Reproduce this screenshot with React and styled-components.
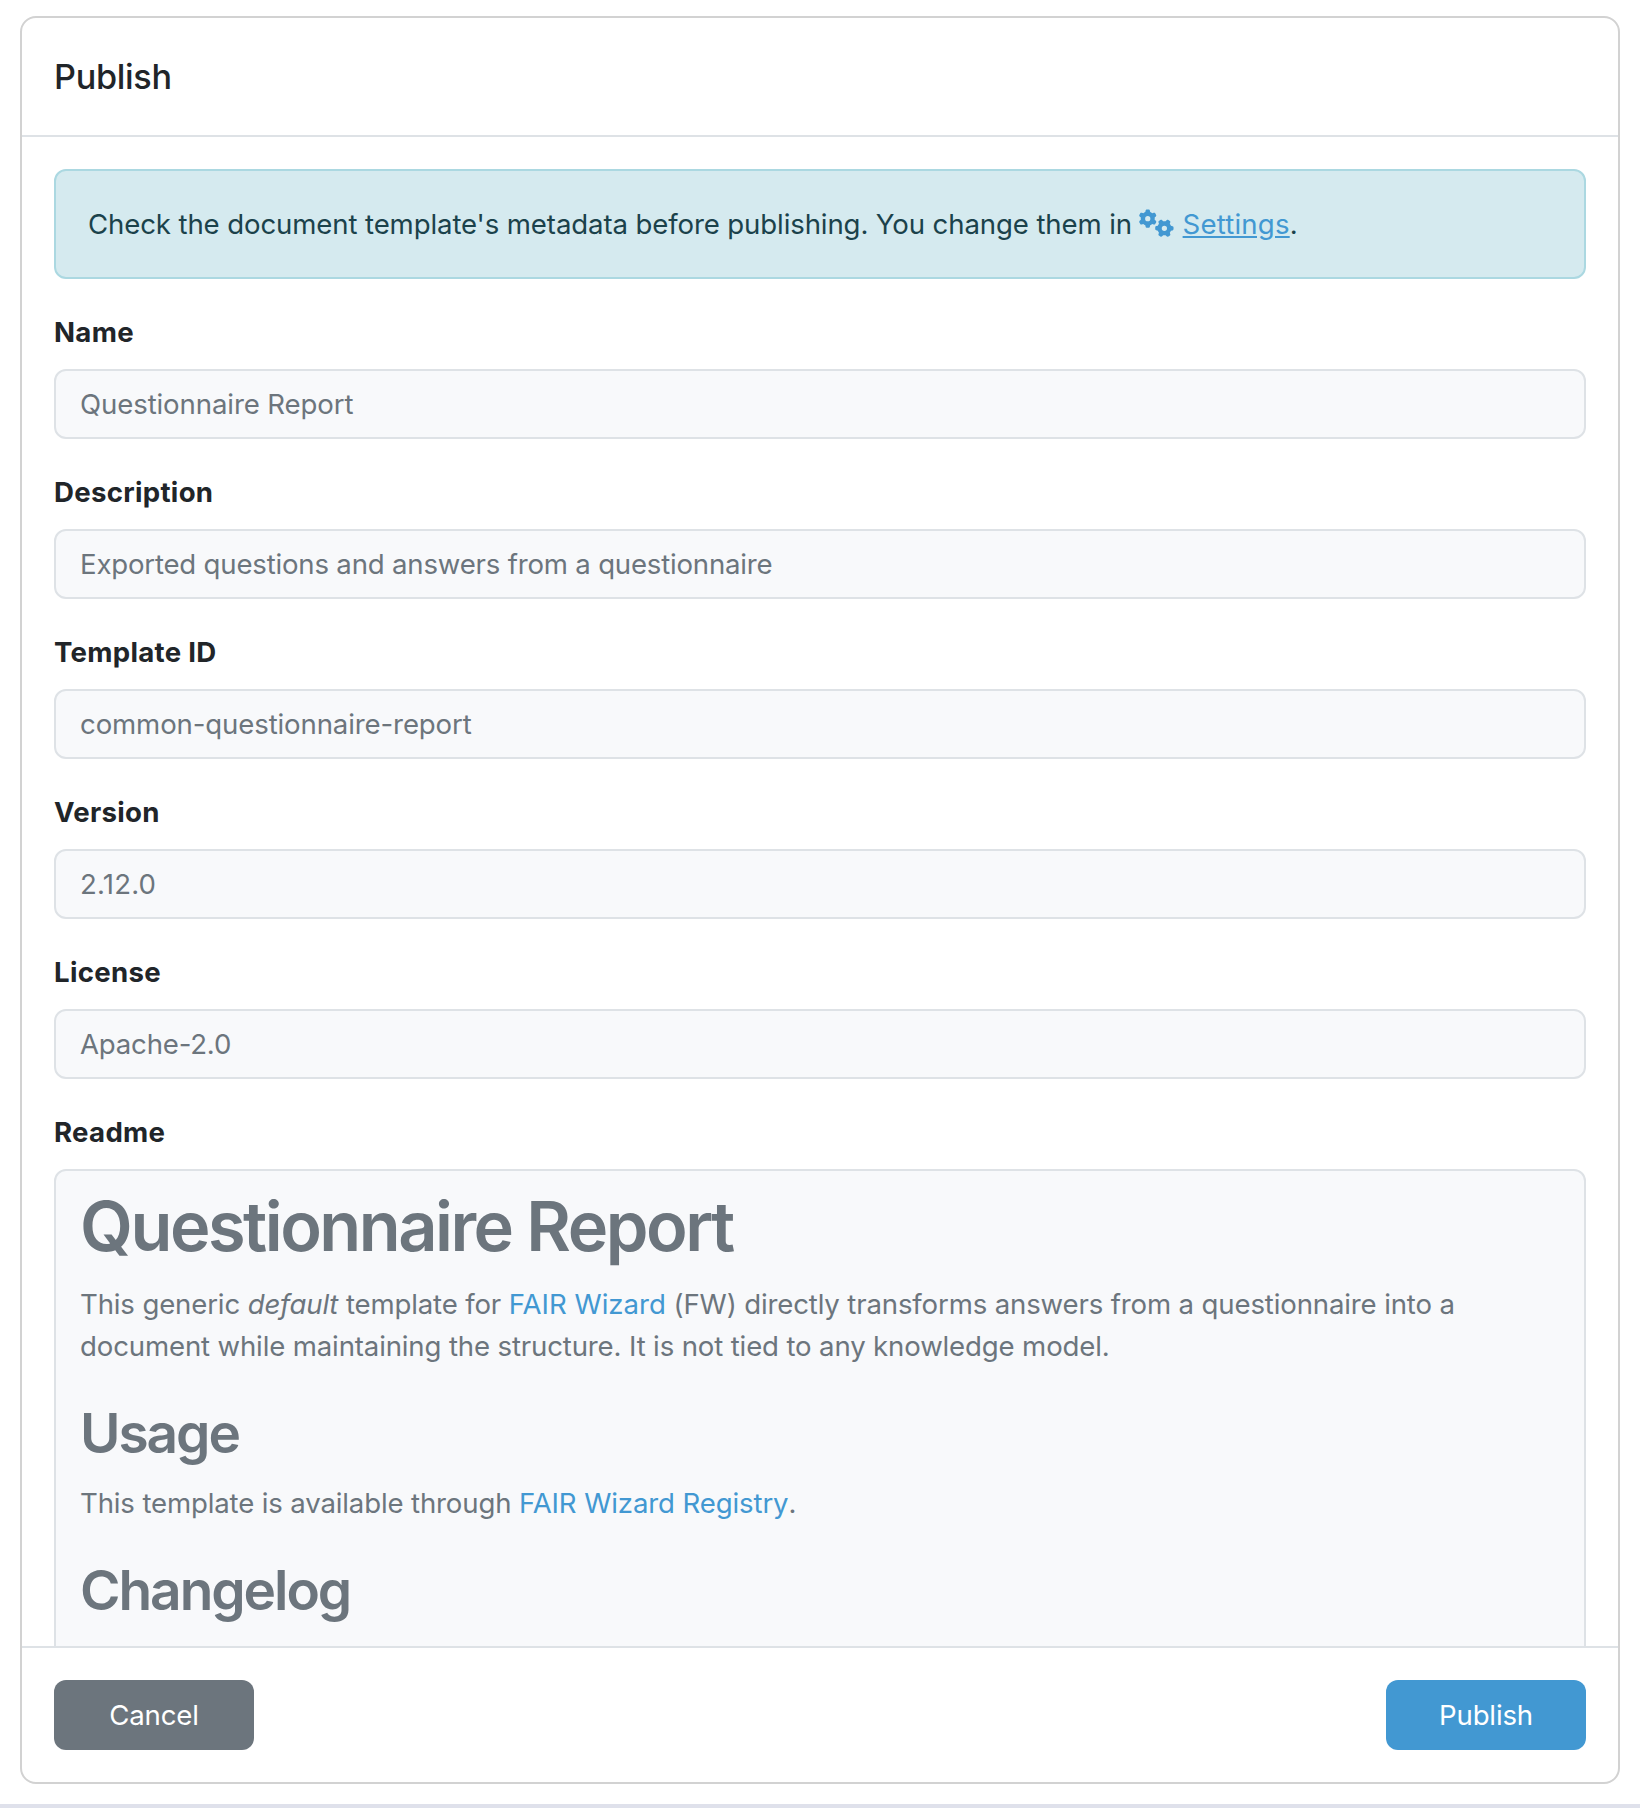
import React from 'react';
import styled, { createGlobalStyle } from 'styled-components';
import { FaGears } from 'react-icons/fa6';

const GlobalStyle = createGlobalStyle`
  *, *::before, *::after { box-sizing: border-box; }
  body {
    margin: 0;
    background: #fff;
    color: #212529;
    font-family: Inter, "Liberation Sans", sans-serif;
    font-size: 27.6px;
    line-height: 42px;
  }
`;

const Page = styled.main`
  height: 1808px;
  padding: 16px 20px 20px;
  border-bottom: 4px solid #dfe1eb;
`;

const Card = styled.section`
  display: flex;
  flex-direction: column;
  height: 1768px;
  overflow: hidden;
  border: 2px solid #d2d2d2;
  border-radius: 16px;
  background: #fff;
`;

const CardHeader = styled.header`
  flex: none;
  padding: 32px;
  border-bottom: 2px solid #dee2e6;
`;

const Title = styled.h5`
  margin: 0;
  font-size: 34.2px;
  font-weight: 500;
  letter-spacing: -0.3px;
  line-height: 53px;
`;

const CardBody = styled.div`
  flex: 1;
  min-height: 0;
  overflow: hidden;
  padding: 32px;
`;

const CardFooter = styled.footer`
  flex: none;
  display: flex;
  justify-content: space-between;
  padding: 32px;
  border-top: 2px solid #dee2e6;
`;

const Alert = styled.div`
  height: 110px;
  padding: 32px;
  border: 2px solid #abd8e1;
  border-radius: 12px;
  background: #d5eaef;
  color: #1b424b;
  letter-spacing: -0.12px;
`;

const Link = styled.a`
  color: #4298d2;
  letter-spacing: ${({ $tracking = 0 }) => $tracking}px;
  text-decoration: ${({ $underline }) => ($underline ? 'underline' : 'none')};
`;

const GearsIcon = styled(FaGears)`
  width: 35px;
  height: 28px;
  margin: 0 9px 0 -1px;
  color: #4298d2;
  vertical-align: -3px;
`;

const Field = styled.div`
  margin-top: 32px;
`;

const Label = styled.div`
  margin-bottom: 16px;
  font-weight: 700;
  letter-spacing: 0.3px;
`;

const Value = styled.div`
  padding: 12px 24px;
  border: 2px solid #dee2e6;
  border-radius: 12px;
  background: #f8f9fb;
  color: #6c757d;
  letter-spacing: ${({ $tracking = 0 }) => $tracking}px;
`;

const Readme = styled(Value)`
  padding-bottom: 48px;
`;

const Heading = styled.h1`
  margin: 0 0 14px;
  padding-top: 2px;
  font-size: 68.5px;
  font-weight: 600;
  letter-spacing: -2.5px;
  line-height: 84px;
`;

const Subheading = styled.h2`
  margin: 0 0 15px;
  padding-top: 1px;
  font-size: 55px;
  font-weight: 600;
  letter-spacing: -2.05px;
  line-height: 67.2px;
`;

const Paragraph = styled.p`
  margin: 0 0 32px;
  letter-spacing: -0.15px;
`;

const Button = styled.button`
  width: 200px;
  height: 70px;
  border: 0;
  border-radius: 12px;
  background: ${({ $primary }) => ($primary ? '#4298d2' : '#6c757d')};
  color: #fff;
  font: inherit;
  letter-spacing: -0.18px;
`;

const fields = [
  { label: 'Name', value: 'Questionnaire Report', tracking: -0.11 },
  { label: 'Description', value: 'Exported questions and answers from a questionnaire', tracking: -0.2 },
  { label: 'Template ID', value: 'common-questionnaire-report', tracking: -0.13 },
  { label: 'Version', value: '2.12.0', tracking: 0.18 },
  { label: 'License', value: 'Apache-2.0', tracking: -0.2 },
];

export default function App() {
  return (
    <Page>
      <GlobalStyle />
      <Card>
        <CardHeader>
          <Title>Publish</Title>
        </CardHeader>
        <CardBody>
          <Alert>
            Check the document template's metadata before publishing. You change them in{' '}
            <GearsIcon />
            <Link $underline $tracking={0.18}>Settings</Link>.
          </Alert>
          {fields.map(({ label, value, tracking }) => (
            <Field key={label}>
              <Label>{label}</Label>
              <Value $tracking={tracking}>{value}</Value>
            </Field>
          ))}
          <Field>
            <Label>Readme</Label>
            <Readme>
              <Heading>Questionnaire Report</Heading>
              <Paragraph>
                This generic <em>default</em> template for{' '}
                <Link>FAIR Wizard</Link> (FW) directly transforms answers from a
                questionnaire into a document while maintaining the structure. It is not tied to
                any knowledge model.
              </Paragraph>
              <Subheading>Usage</Subheading>
              <Paragraph>
                This template is available through{' '}
                <Link $tracking={-0.12}>FAIR Wizard Registry</Link>.
              </Paragraph>
              <Subheading>Changelog</Subheading>
            </Readme>
          </Field>
        </CardBody>
        <CardFooter>
          <Button type="button">Cancel</Button>
          <Button type="button" $primary>Publish</Button>
        </CardFooter>
      </Card>
    </Page>
  );
}
